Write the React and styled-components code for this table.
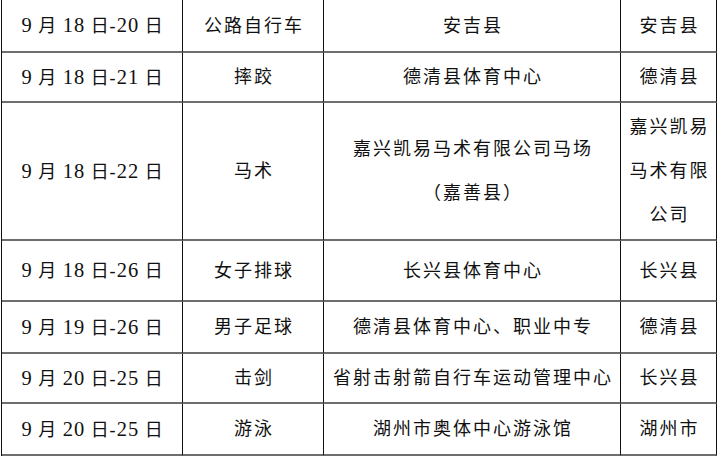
import React from "react";
import styled, { createGlobalStyle } from "styled-components";

const Global = createGlobalStyle`
  html, body { margin: 0; padding: 0; background: #fff; }
  body { width: 719px; height: 456px; overflow: hidden; }
`;

const Table = styled.div`
  display: grid;
  grid-template-columns: 181px 141px 297px 96px;
  grid-template-rows: 53px 50px 138px 61px 52px 50px 52px;
  width: max-content;
  margin: -2px 0 0 1px;
  border-left: 1px solid #111;
  border-top: 2px solid #6e6e6e;
  font-family: "Liberation Serif", "Noto Sans CJK SC", serif;
  font-size: 18px;
  color: #111;
`;

const Cell = styled.div`
  box-sizing: border-box;
  display: flex;
  align-items: center;
  justify-content: center;
  text-align: center;
  border-right: 1px solid #111;
  border-bottom: 2px solid #6e6e6e;
  letter-spacing: ${(p) => (p.$tight ? "1px" : "2px")};
  padding-left: ${(p) => (p.$tight ? "1px" : "2px")};
  line-height: ${(p) => (p.$multi ? "44px" : "20px")};
  white-space: ${(p) => (p.$wrap ? "normal" : "pre")};
`;

const Label = styled.span`
  white-space: pre;
`;

const Num = styled.span`
  font-size: 20.5px;
`;

const DateText = ({ m, d1, d2 }) => (
  <Label>
    <Num>{m}</Num>
    {" 月 "}
    <Num>{d1}</Num>
    {" 日-"}
    <Num>{d2}</Num>
    {" 日"}
  </Label>
);

const rows = [
  [["9", "18", "20"], "公路自行车", "安吉县", "安吉县"],
  [["9", "18", "21"], "摔跤", "德清县体育中心", "德清县"],
  [["9", "18", "22"], "马术", "horse", "嘉兴凯易马术有限公司"],
  [["9", "18", "26"], "女子排球", "长兴县体育中心", "长兴县"],
  [["9", "19", "26"], "男子足球", "德清县体育中心、职业中专", "德清县"],
  [["9", "20", "25"], "击剑", "省射击射箭自行车运动管理中心", "长兴县"],
  [["9", "20", "25"], "游泳", "湖州市奥体中心游泳馆", "湖州市"],
];

export default function App() {
  return (
    <>
      <Global />
      <Table>
        {rows.map((r, i) => (
          <React.Fragment key={i}>
            <Cell $tight>
              <DateText m={r[0][0]} d1={r[0][1]} d2={r[0][2]} />
            </Cell>
            <Cell>{r[1]}</Cell>
            {r[2] === "horse" ? (
              <Cell $multi>
                <span>
                  嘉兴凯易马术有限公司马场
                  <br />
                  （嘉善县）
                </span>
              </Cell>
            ) : (
              <Cell>{r[2]}</Cell>
            )}
            <Cell $multi={i === 2} $wrap={i === 2}>
              {r[3]}
            </Cell>
          </React.Fragment>
        ))}
      </Table>
    </>
  );
}
